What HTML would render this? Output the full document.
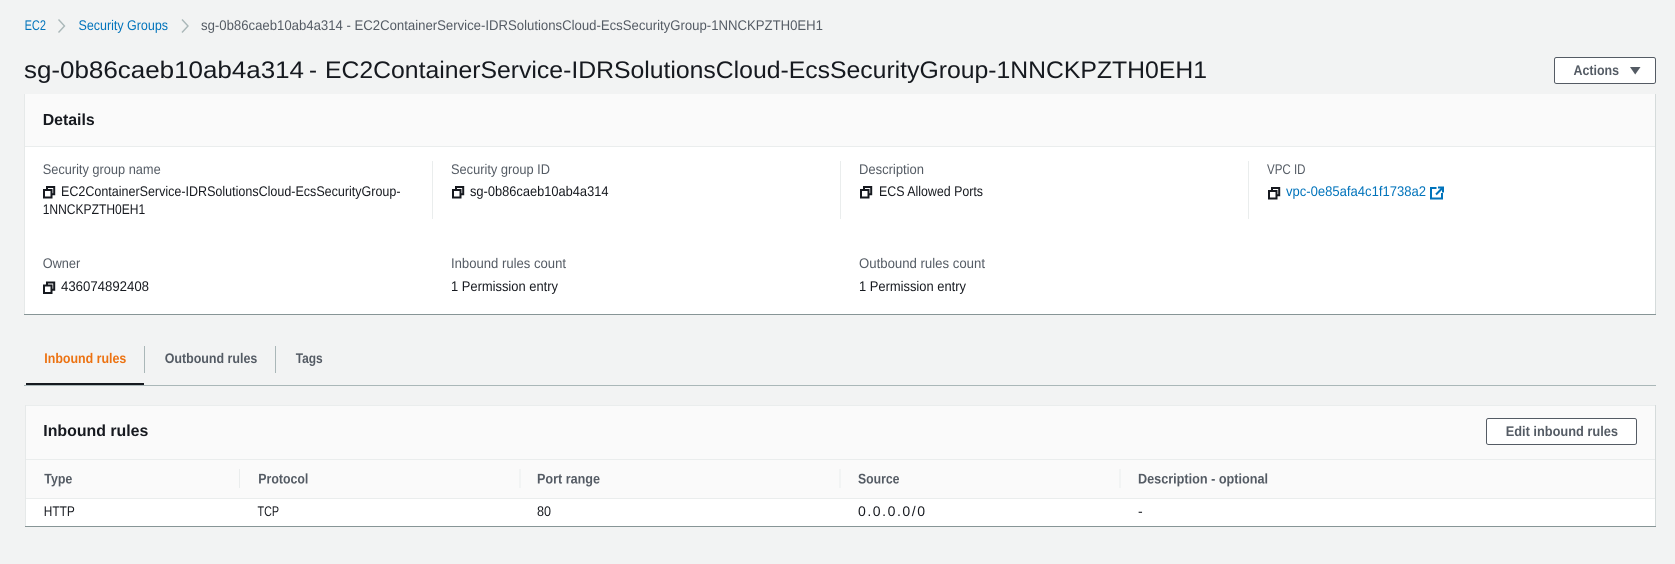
<!DOCTYPE html>
<html lang="en">
<head>
<meta charset="utf-8">
<title>Security Group</title>
<style>
html,body{margin:0;padding:0;width:1675px;height:564px;overflow:hidden;background:#f2f3f3}
svg{display:block}
text{font-family:"Liberation Sans",sans-serif;font-size:14px;fill:#16191f;text-rendering:geometricPrecision}
.l{fill:#545b64}
.a{fill:#0073bb}
.b{font-weight:700}
.g{fill:#545b64;font-weight:700}
</style>
</head>
<body>
<svg xmlns="http://www.w3.org/2000/svg" width="1675" height="564" viewBox="0 0 1675 564">
<defs>
<g id="c" fill="none" stroke="#16191f" stroke-width="2">
<rect x="1" y="4" width="7.5" height="7.5"/>
<path d="M4 3.5V1H11.2V8.2H9"/>
</g>
</defs>
<rect width="1675" height="564" fill="#f2f3f3"/>

<!-- breadcrumbs -->
<text class="a" x="24.6" y="30" textLength="21.4" lengthAdjust="spacingAndGlyphs">EC2</text>
<path d="M58.5 19.5L64.5 26L58.5 32.5" fill="none" stroke="#aab7b8" stroke-width="1.4"/>
<text class="a" x="78.5" y="30" textLength="89.5" lengthAdjust="spacingAndGlyphs">Security Groups</text>
<path d="M182 19.5L188 26L182 32.5" fill="none" stroke="#aab7b8" stroke-width="1.4"/>
<text class="l" x="201" y="30" textLength="622" lengthAdjust="spacingAndGlyphs">sg-0b86caeb10ab4a314 - EC2ContainerService-IDRSolutionsCloud-EcsSecurityGroup-1NNCKPZTH0EH1</text>

<!-- title -->
<text x="24" y="78" style="font-size:24px" textLength="280" lengthAdjust="spacingAndGlyphs">sg-0b86caeb10ab4a314</text>
<text x="309" y="78" style="font-size:24px" textLength="8" lengthAdjust="spacingAndGlyphs">-</text>
<text x="325" y="78" style="font-size:24px" textLength="882" lengthAdjust="spacingAndGlyphs">EC2ContainerService-IDRSolutionsCloud-EcsSecurityGroup-1NNCKPZTH0EH1</text>

<!-- actions -->
<rect x="1554.5" y="57.5" width="101" height="26" rx="2" fill="#fff" stroke="#545b64"/>
<text class="g" x="1573.5" y="75" textLength="45.5" lengthAdjust="spacingAndGlyphs">Actions</text>
<path d="M1630 67H1640.5L1635.2 74.5Z" fill="#545b64"/>

<!-- details card -->
<rect x="24" y="94" width="1632" height="220" fill="#fff"/>
<rect x="24" y="94" width="1632" height="53" fill="#fafafa"/>
<rect x="24" y="146" width="1632" height="1" fill="#eaeded"/>
<rect x="24" y="94" width="1" height="220" fill="#e6e9e9"/>
<rect x="1655" y="94" width="1" height="220" fill="#d5dbdb"/>
<rect x="24" y="314" width="1632" height="1" fill="#879596"/>
<text class="b" x="42.7" y="125" style="font-size:16px" textLength="52" lengthAdjust="spacingAndGlyphs">Details</text>

<rect x="432" y="161" width="1" height="58" fill="#eaeded"/>
<rect x="840" y="161" width="1" height="58" fill="#eaeded"/>
<rect x="1248" y="161" width="1" height="58" fill="#eaeded"/>

<text class="l" x="42.7" y="174" textLength="118" lengthAdjust="spacingAndGlyphs">Security group name</text>
<text class="l" x="451" y="174" textLength="99" lengthAdjust="spacingAndGlyphs">Security group ID</text>
<text class="l" x="859" y="174" textLength="65" lengthAdjust="spacingAndGlyphs">Description</text>
<text class="l" x="1267" y="174" textLength="38.5" lengthAdjust="spacingAndGlyphs">VPC ID</text>

<use href="#c" x="43" y="186"/>
<text x="61" y="196" textLength="339.5" lengthAdjust="spacingAndGlyphs">EC2ContainerService-IDRSolutionsCloud-EcsSecurityGroup-</text>
<text x="42.7" y="214" textLength="102.5" lengthAdjust="spacingAndGlyphs">1NNCKPZTH0EH1</text>
<use href="#c" x="452" y="186"/>
<text x="470" y="196" textLength="138.5" lengthAdjust="spacingAndGlyphs">sg-0b86caeb10ab4a314</text>
<use href="#c" x="860" y="186"/>
<text x="879" y="196" textLength="104" lengthAdjust="spacingAndGlyphs">ECS Allowed Ports</text>
<use href="#c" x="1268" y="187"/>
<text class="a" x="1286" y="196" textLength="140" lengthAdjust="spacingAndGlyphs">vpc-0e85afa4c1f1738a2</text>
<g fill="none" stroke="#0073bb" stroke-width="2">
<path d="M1436.5 188H1431V198.5H1442V193"/>
<path d="M1438 187.5H1443V192.5"/>
<path d="M1442.5 188L1436 194.5"/>
</g>

<text class="l" x="42.7" y="268" textLength="37.5" lengthAdjust="spacingAndGlyphs">Owner</text>
<text class="l" x="451" y="268" textLength="115" lengthAdjust="spacingAndGlyphs">Inbound rules count</text>
<text class="l" x="859" y="268" textLength="126" lengthAdjust="spacingAndGlyphs">Outbound rules count</text>
<use href="#c" x="43" y="281.5"/>
<text x="61" y="291" textLength="88" lengthAdjust="spacingAndGlyphs">436074892408</text>
<text x="451" y="291" textLength="107" lengthAdjust="spacingAndGlyphs">1 Permission entry</text>
<text x="859" y="291" textLength="107" lengthAdjust="spacingAndGlyphs">1 Permission entry</text>

<!-- tabs -->
<text class="b" x="44.3" y="363" style="fill:#ec7211" textLength="82" lengthAdjust="spacingAndGlyphs">Inbound rules</text>
<text class="g" x="164.7" y="363" textLength="92.6" lengthAdjust="spacingAndGlyphs">Outbound rules</text>
<text class="g" x="295.7" y="363" textLength="27" lengthAdjust="spacingAndGlyphs">Tags</text>
<rect x="144" y="346" width="1" height="27" fill="#aab7b8"/>
<rect x="275" y="346" width="1" height="27" fill="#aab7b8"/>
<rect x="24" y="385" width="1632" height="1" fill="#aab7b8"/>
<rect x="26" y="383" width="118" height="2" fill="#16191f"/>

<!-- inbound card -->
<rect x="25" y="405" width="1631" height="121" fill="#fff"/>
<rect x="25" y="405" width="1631" height="93" fill="#fafafa"/>
<rect x="25" y="405" width="1631" height="1" fill="#eaeded"/>
<rect x="25" y="459" width="1631" height="1" fill="#eaeded"/>
<rect x="25" y="498" width="1631" height="1" fill="#eaeded"/>
<rect x="25" y="405" width="1" height="121" fill="#e6e9e9"/>
<rect x="1655" y="405" width="1" height="121" fill="#d5dbdb"/>
<rect x="25" y="526" width="1631" height="1" fill="#879596"/>
<text class="b" x="43.3" y="436" style="font-size:16px" textLength="105" lengthAdjust="spacingAndGlyphs">Inbound rules</text>
<rect x="1486.5" y="418.5" width="150" height="26" rx="2" fill="#fff" stroke="#545b64"/>
<text class="g" x="1505.7" y="436" textLength="112.3" lengthAdjust="spacingAndGlyphs">Edit inbound rules</text>

<text class="g" x="44.3" y="483.5" textLength="28" lengthAdjust="spacingAndGlyphs">Type</text>
<text class="g" x="258.3" y="483.5" textLength="50" lengthAdjust="spacingAndGlyphs">Protocol</text>
<text class="g" x="537" y="483.5" textLength="63" lengthAdjust="spacingAndGlyphs">Port range</text>
<text class="g" x="858" y="483.5" textLength="41.5" lengthAdjust="spacingAndGlyphs">Source</text>
<text class="g" x="1138" y="483.5" textLength="130" lengthAdjust="spacingAndGlyphs">Description - optional</text>
<rect x="239" y="469" width="1" height="19" fill="#eaeded"/>
<rect x="519.5" y="469" width="1" height="19" fill="#eaeded"/>
<rect x="839.5" y="469" width="1" height="19" fill="#eaeded"/>
<rect x="1119.5" y="469" width="1" height="19" fill="#eaeded"/>

<text x="43.8" y="516" textLength="31" lengthAdjust="spacingAndGlyphs">HTTP</text>
<text x="257.5" y="516" textLength="21.5" lengthAdjust="spacingAndGlyphs">TCP</text>
<text x="537" y="516" textLength="14" lengthAdjust="spacingAndGlyphs">80</text>
<text x="858" y="516" textLength="67" lengthAdjust="spacing">0.0.0.0/0</text>
<text x="1138" y="516">-</text>
</svg>
</body>
</html>
